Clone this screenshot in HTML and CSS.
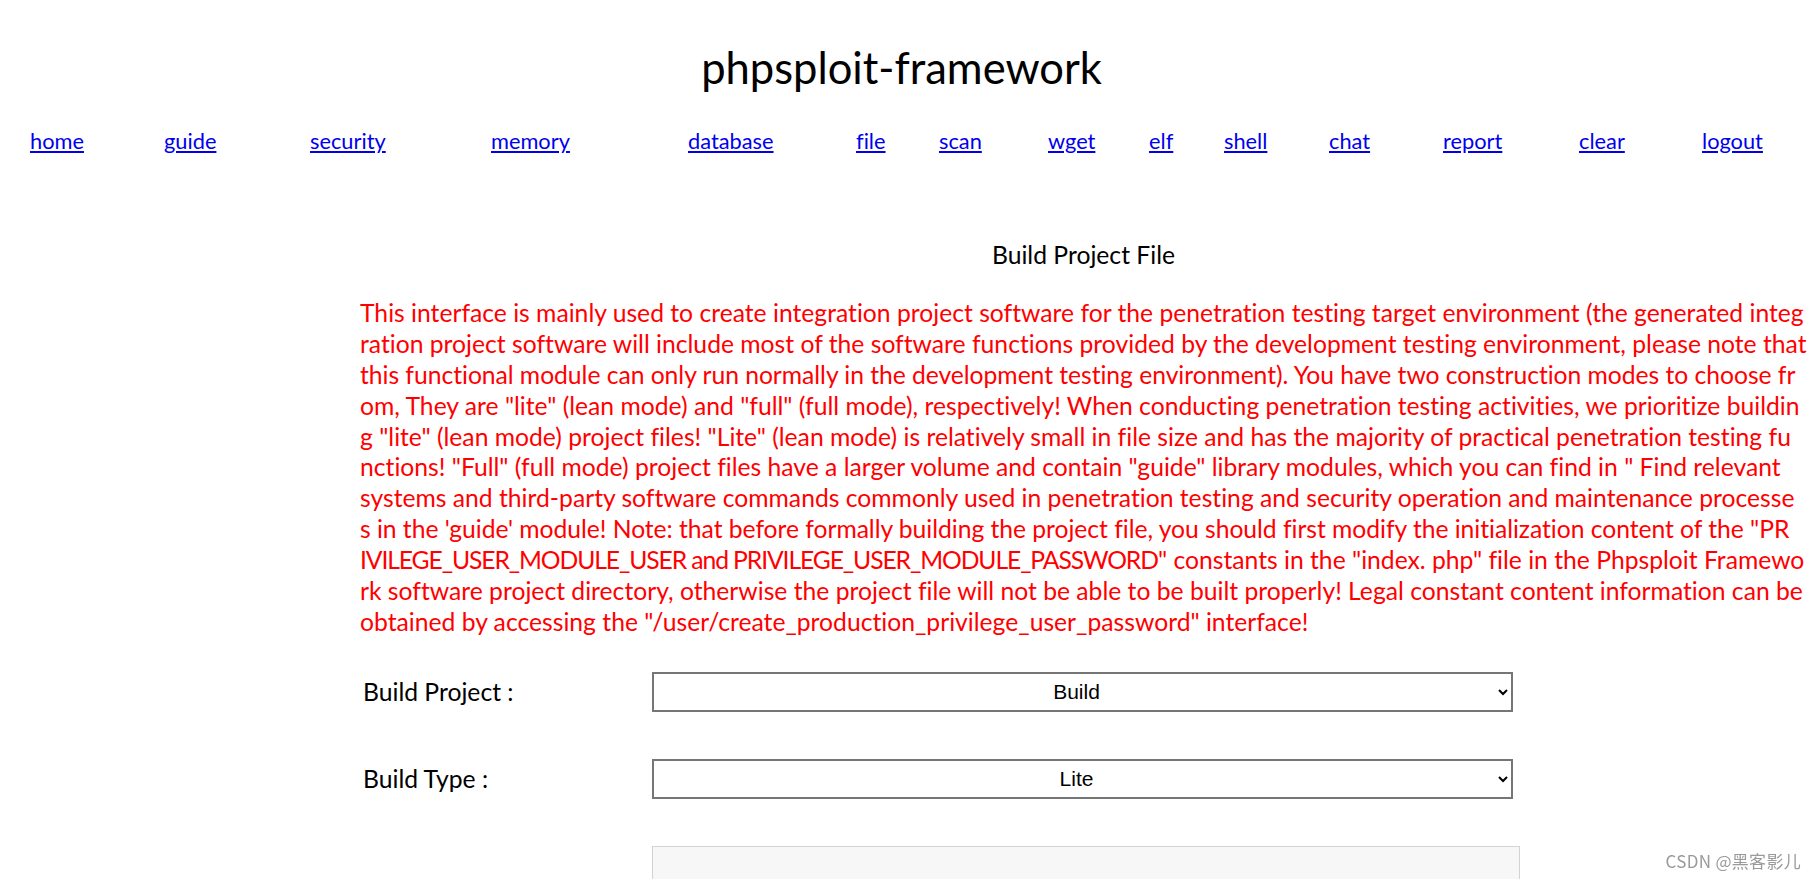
FILE: index.html
```html
<!DOCTYPE html>
<html lang="en">
<head>
<meta charset="utf-8">
<title>phpsploit-framework</title>
<link rel="stylesheet" href="styles.css">
</head>
<body>
<header class="masthead">
  <h1 class="site-title">phpsploit-framework</h1>
  <nav class="main-nav">
    <a href="#">home</a>
    <a href="#">guide</a>
    <a href="#">security</a>
    <a href="#">memory</a>
    <a href="#">database</a>
    <a href="#">file</a>
    <a href="#">scan</a>
    <a href="#">wget</a>
    <a href="#">elf</a>
    <a href="#">shell</a>
    <a href="#">chat</a>
    <a href="#">report</a>
    <a href="#">clear</a>
    <a href="#">logout</a>
  </nav>
</header>
<main class="content">
  <h2 class="section-title">Build Project File</h2>
  <p class="notice">This interface is mainly used to create integration project software for the penetration testing target environment (the generated integ<br>ration project software will include most of the software functions provided by the development testing environment, please note that<br><span class="tight-1">this functional module can only run normally in the development testing environment). You have two construction modes to choose fr</span><br>om, They are "lite" (lean mode) and "full" (full mode), respectively! When conducting penetration testing activities, we prioritize buildin<br>g "lite" (lean mode) project files! "Lite" (lean mode) is relatively small in file size and has the majority of practical penetration testing fu<br>nctions! "Full" (full mode) project files have a larger volume and contain "guide" library modules, which you can find in " Find relevant<br>systems and third-party software commands commonly used in penetration testing and security operation and maintenance processe<br><span class="tight-1">s in the 'guide' module! Note: that before formally building the project file, you should first modify the initialization content of the "PR</span><br><span class="tight-caps">IVILEGE_USER_MODULE_USER and PRIVILEGE_USER_MODULE_PASSWORD</span>" constants in the "index. php" file in the Phpsploit Framewo<br>rk software project directory, otherwise the project file will not be able to be built properly! Legal constant content information can be<br>obtained by accessing the "/user/create_production_privilege_user_password" interface!</p>
  <form class="build-form">
    <label class="field-label" for="project">Build Project :</label>
    <select class="field-select" id="project"><option>Build</option></select>
    <label class="field-label" for="type">Build Type :</label>
    <select class="field-select" id="type"><option>Lite</option><option>Full</option></select>
    <span class="field-label"></span>
    <textarea class="output-box" disabled></textarea>
  </form>
</main>
<div class="watermark">CSDN @黑客影儿</div>
</body>
</html>
```
FILE: styles.css
```css
html, body {
  margin: 0;
  padding: 0;
  background: #fff;
}
body {
  font-family: Lato, "Noto Sans", sans-serif;
  font-variant-ligatures: none;
  color: #000;
  overflow: hidden;
}
.masthead {
  padding-top: 40.5px;
}
.site-title {
  margin: 0;
  padding-right: 14px;
  font-size: 43.5px;
  line-height: 52px;
  font-weight: 400;
  text-align: center;
}
.main-nav {
  margin-top: 35.1px;
  display: grid;
  grid-template-columns: 134px 146px 181px 197px 168px 83px 109px 101px 75px 105px 114px 136px 123px auto;
  padding-left: 30px;
  font-size: 21.8px;
  line-height: 26px;
}
.main-nav a {
  color: #0000ee;
  justify-self: start;
}
.content {
  margin-left: 360px;
  width: 1447px;
}
.section-title {
  margin: 86.4px 0 0;
  font-size: 24.7px;
  line-height: 30.9px;
  font-weight: 400;
  text-align: center;
}
.notice {
  margin: 27px 0 0;
  color: #ff0000;
  font-size: 24.7px;
  line-height: 30.9px;
  white-space: nowrap;
}
.tight-1 {
  letter-spacing: -0.04px;
}
.tight-caps {
  letter-spacing: -1.1px;
}
.build-form {
  margin-top: 34px;
  display: grid;
  grid-template-columns: 292px 868px;
  row-gap: 47px;
  align-items: center;
}
.field-label {
  padding-left: 3px;
  font-size: 24.7px;
  line-height: 30px;
}
.field-select {
  width: 861px;
  height: 40px;
  box-sizing: border-box;
  border: 2px solid #767676;
  border-radius: 0;
  background-color: #fff;
  font-family: "Liberation Sans", Arial, sans-serif;
  font-size: 21px;
  color: #000;
  text-align: center;
  text-align-last: center;
  padding: 0 8px;
  justify-self: start;
}
.output-box {
  width: 868px;
  height: 120px;
  box-sizing: border-box;
  border: 1px solid #d3d3d3;
  background: #f7f7f7;
  resize: none;
  margin: 0;
  display: block;
}
.watermark {
  position: fixed;
  right: 16px;
  bottom: 6px;
  font-family: "Noto Sans CJK SC", sans-serif;
  font-size: 17px;
  color: #9a9a9a;
  letter-spacing: 0.3px;
}
```
